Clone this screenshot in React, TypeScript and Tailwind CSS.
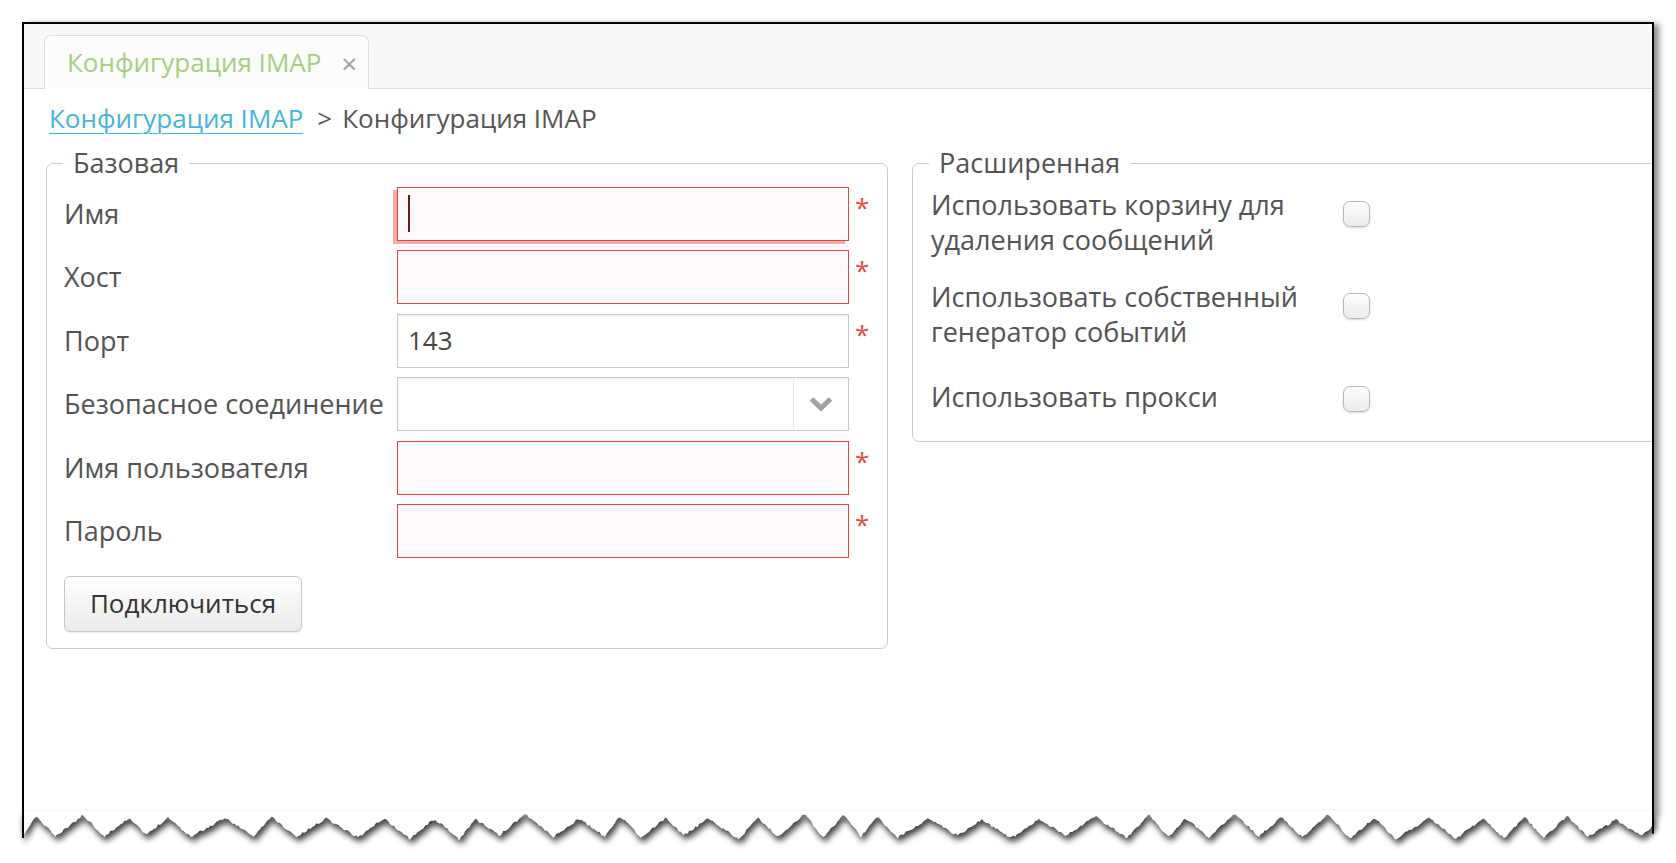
import React from "react"

const font = { fontFamily: '"Open Sans", "Liberation Sans", sans-serif' }

// torn paper edge along the bottom of the frame
const FRAME_W = 1632
let seed = 11
const rnd = () => {
  seed = (seed * 16807) % 2147483647
  return seed / 2147483647
}
const torn: [number, number][] = []
{
  let x = 0
  let prev = 24
  while (x < FRAME_W) {
    const span = 34 + rnd() * 30
    const peak = 0 + rnd() * 7
    const valley = 22 + rnd() * 4
    const half = span * (0.4 + rnd() * 0.2)
    for (let t = 0; t <= span; t += 2) {
      let y
      if (t < half) y = prev + (peak - prev) * (t / half)
      else y = peak + (valley - peak) * ((t - half) / (span - half))
      y += (rnd() - 0.5) * 2.5
      torn.push([Math.min(x + t, FRAME_W), Math.max(0, y)])
    }
    prev = valley
    x += span
  }
}
const tornPoly =
  "0,-2 " +
  FRAME_W +
  ",-2 " +
  torn
    .slice()
    .reverse()
    .map(([x, y]) => `${x.toFixed(1)},${y.toFixed(1)}`)
    .join(" ")

const Row = ({ label, children, req }: { label: string; children: React.ReactNode; req?: boolean }) => (
  <div className="flex items-start">
    <div className="w-[333px] h-[54px] leading-[54px] text-[27px] text-[#535353] whitespace-nowrap">{label}</div>
    <div className="w-[452px] h-[54px]">{children}</div>
    {req && <span className="ml-[6px] mt-[2px] text-[26px] leading-[36px] text-[#e74c3c]">*</span>}
  </div>
)

const ErrInput = ({ focused }: { focused?: boolean }) => (
  <div
    className={
      "relative h-full w-full border border-[#e5473b] bg-[#fffafa] " +
      (focused ? "shadow-[-4px_3px_0_0_#f6aba6]" : "")
    }
  >
    {focused && <span className="absolute left-[10px] top-[7px] h-[37px] w-[2px] bg-[#6e1d16]" />}
  </div>
)

const Check = () => (
  <div className="h-[26px] w-[27px] rounded-[7px] border border-[#b9b9b9] bg-gradient-to-b from-[#fdfdfd] to-[#ececec] shadow-[0_1px_2px_rgba(0,0,0,0.15)]" />
)

export default function App() {
  return (
    <div className="h-[863px] w-[1676px] overflow-hidden bg-white pl-[22px] pt-[22px]" style={font}>
      <div className="flex h-[793px] w-[1632px] flex-col overflow-hidden border-l-2 border-r-2 border-t-2 border-black bg-white shadow-[5px_2px_6px_rgba(0,0,0,0.45)]">
        {/* tab bar */}
        <div className="flex h-[65px] shrink-0 items-end border-b border-[#dddddd] bg-[#f8f8f8] pl-[20px]">
          <div className="-mb-px flex h-[54px] w-[325px] items-center rounded-t-[7px] border border-b-0 border-[#dddddd] bg-[#fcfcfc] pl-[22px]">
            <span className="text-[26px] text-[#a5d07c]">Конфигурация IMAP</span>
            <span className="ml-[20px] text-[28px] leading-none text-[#a0a0a0]">×</span>
          </div>
        </div>

        {/* breadcrumb */}
        <div className="mt-[11px] flex h-[36px] items-center pl-[25px] text-[26px] leading-[36px]">
          <span className="text-[#46b3e0] underline decoration-1 underline-offset-[5px]">Конфигурация IMAP</span>
          <span className="ml-[14px] text-[#555555]">&gt;</span>
          <span className="ml-[10px] text-[#555555]">Конфигурация IMAP</span>
        </div>

        <div className="mt-[9px] flex items-start pl-[22px]">
          {/* basic */}
          <fieldset className="w-[842px] shrink-0 rounded-[7px] border border-[#cccccc] pb-[16px] pl-[17px]">
            <legend className="-ml-px px-[10px] text-[27px] leading-[36px] text-[#535353]">Базовая</legend>
            <div className="mt-[6px] flex flex-col gap-[9.4px]">
              <Row label="Имя" req>
                <ErrInput focused />
              </Row>
              <Row label="Хост" req>
                <ErrInput />
              </Row>
              <Row label="Порт" req>
                <div className="flex h-full w-full items-center border border-[#c8c8c8] bg-white pl-[10px] text-[26px] text-[#454545] shadow-[inset_0_2px_2px_rgba(0,0,0,0.04)]">
                  143
                </div>
              </Row>
              <Row label="Безопасное соединение">
                <div className="flex h-full w-full border border-[#c8c8c8] bg-white shadow-[inset_0_2px_2px_rgba(0,0,0,0.04)]">
                  <div className="flex-1" />
                  <div className="my-[2px] flex w-[55px] items-center justify-center border-l border-[#e3e3e3]">
                    <svg width="24" height="16" viewBox="0 0 24 16">
                      <polyline points="2.5,3 12,12 21.5,3" fill="none" stroke="#a2a2a2" strokeWidth="5" />
                    </svg>
                  </div>
                </div>
              </Row>
              <Row label="Имя пользователя" req>
                <ErrInput />
              </Row>
              <Row label="Пароль" req>
                <ErrInput />
              </Row>
            </div>
            <button className="mt-[18px] h-[56px] w-[238px] rounded-[6px] border border-[#c6c6c6] bg-gradient-to-b from-[#ffffff] to-[#ebebeb] text-[26px] text-[#333333] shadow-[0_1px_1px_rgba(0,0,0,0.08)]">
              Подключиться
            </button>
          </fieldset>

          {/* advanced */}
          <fieldset className="ml-[24px] w-[780px] shrink-0 rounded-[7px] border border-[#cccccc] pb-[27px] pl-[18px]">
            <legend className="-ml-[2px] px-[10px] text-[27px] leading-[36px] text-[#535353]">Расширенная</legend>
            <div className="mt-[6px] flex items-start">
              <div className="w-[390px] text-[27px] leading-[35px] text-[#535353]">Использовать корзину для удаления сообщений</div>
              <div className="ml-[22px] mt-[14px]">
                <Check />
              </div>
            </div>
            <div className="mt-[22px] flex items-start">
              <div className="w-[390px] text-[27px] leading-[35px] text-[#535353]">Использовать собственный генератор событий</div>
              <div className="ml-[22px] mt-[14px]">
                <Check />
              </div>
            </div>
            <div className="mt-[30px] flex items-start">
              <div className="w-[390px] text-[27px] leading-[35px] text-[#535353]">Использовать прокси</div>
              <div className="ml-[22px] mt-[7px]">
                <Check />
              </div>
            </div>
          </fieldset>
        </div>
      </div>

      {/* torn bottom edge */}
      <svg width={FRAME_W + 12} height="46" className="-mt-[2px] block overflow-visible">
        <defs>
          <filter id="tornShadow" x="-5%" y="-50%" width="110%" height="250%">
            <feDropShadow dx="2" dy="5" stdDeviation="3" floodColor="#000" floodOpacity="0.75" />
          </filter>
        </defs>
        <polygon points={tornPoly} fill="#fff" filter="url(#tornShadow)" />
        <line x1="1" y1="-2" x2="1" y2={torn[0][1]} stroke="#000" strokeWidth="2" />
        <line
          x1={FRAME_W - 1}
          y1="-2"
          x2={FRAME_W - 1}
          y2={torn[torn.length - 1][1]}
          stroke="#000"
          strokeWidth="2"
        />
      </svg>
    </div>
  )
}
